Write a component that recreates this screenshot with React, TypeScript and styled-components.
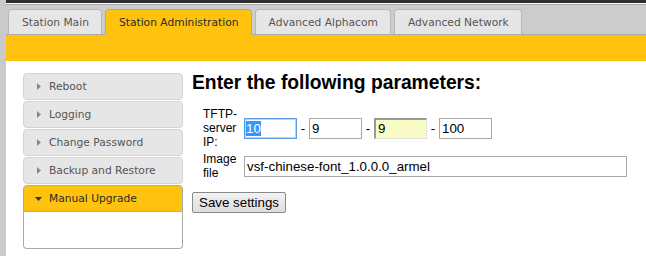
import React from "react";
import styled, { createGlobalStyle } from "styled-components";

const tabs = ["Station Main", "Station Administration", "Advanced Alphacom", "Advanced Network"];
const menu = ["Reboot", "Logging", "Change Password", "Backup and Restore"];

export default function App() {
  return (
    <>
      <GlobalStyle />
      <Page>
        <TabBar>
          {tabs.map((t, i) => (
            <Tab key={t} $active={i === 1}>
              {t}
            </Tab>
          ))}
        </TabBar>
        <YellowBar />
        <Content>
          <Sidebar>
            {menu.map((m) => (
              <MenuItem key={m}>
                <Arrow width="4" height="7" viewBox="0 0 4 7">
                  <path d="M0 0 L4 3.5 L0 7 Z" fill="#888" />
                </Arrow>
                {m}
              </MenuItem>
            ))}
            <ActiveItem>
              <Arrow width="7" height="4" viewBox="0 0 7 4">
                <path d="M0 0 L7 0 L3.5 4 Z" fill="#333" />
              </Arrow>
              Manual Upgrade
            </ActiveItem>
            <Panel />
          </Sidebar>
          <Main>
            <Heading>Enter the following parameters:</Heading>
            <Form>
              <Label>TFTP-server IP:</Label>
              <IpRow>
                <FocusedField>
                  <Selected>10</Selected>
                </FocusedField>
                <Dash>-</Dash>
                <Field $width={53} defaultValue="9" />
                <Dash>-</Dash>
                <Field $width={53} $filled defaultValue="9" />
                <Dash>-</Dash>
                <Field $width={53} defaultValue="100" />
              </IpRow>
              <Label>Image file</Label>
              <Field $width={383} defaultValue="vsf-chinese-font_1.0.0.0_armel" />
            </Form>
            <SaveButton>Save settings</SaveButton>
          </Main>
        </Content>
      </Page>
    </>
  );
}

const GlobalStyle = createGlobalStyle`
  html, body {
    margin: 0;
    padding: 0;
    background: #fff;
  }
  body {
    width: 646px;
    height: 256px;
    overflow: hidden;
    font-family: "Liberation Sans", Arial, sans-serif;
  }
`;

const Page = styled.div`
  box-sizing: border-box;
  min-height: 256px;
  border-left: 6px solid #cacaca;
`;

const TabBar = styled.div`
  display: flex;
  align-items: flex-end;
  gap: 3px;
  height: 35px;
  box-sizing: border-box;
  padding: 0 0 0 2px;
  background: #cccccc;
  border-top: 3px solid #2f2f2f;
  border-bottom: 1px solid #aaa;
  box-shadow: inset 0 1px 0 #fff, inset 0 2px 0 #aaa;
`;

const Tab = styled.div<{ $active?: boolean }>`
  height: 26px;
  box-sizing: border-box;
  display: flex;
  align-items: center;
  padding: 0 12px 0 13px;
  margin-bottom: -1px;
  font-family: "DejaVu Sans", Verdana, sans-serif;
  font-size: 10.7px;
  color: ${(p) => (p.$active ? "#2a2a2a" : "#555")};
  background: ${(p) => (p.$active ? "#ffc20e" : "#e6e6e6")};
  border: 1px solid ${(p) => (p.$active ? "#aaa" : "#b8b8b8")};
  border-bottom-color: ${(p) => (p.$active ? "#ffc20e" : "#aaa")};
  border-radius: 4px 4px 0 0;
`;

const YellowBar = styled.div`
  height: 26px;
  background: #ffc20e;
`;

const Content = styled.div`
  display: flex;
  gap: 9px;
  padding: 12px 0 0 17px;
`;

const Sidebar = styled.div`
  width: 160px;
  display: flex;
  flex-direction: column;
  gap: 1px;
  font-family: "DejaVu Sans", Verdana, sans-serif;
  font-size: 10.7px;
`;

const MenuItem = styled.div`
  height: 27px;
  box-sizing: border-box;
  display: flex;
  align-items: center;
  gap: 8px;
  padding-left: 13px;
  color: #555;
  background: #e6e6e6;
  border: 1px solid #d3d3d3;
  border-radius: 4px;
`;

const ActiveItem = styled(MenuItem)`
  gap: 7px;
  padding-left: 11px;
  color: #2a2a2a;
  background: #ffc20e;
  border-color: #aaa;
  border-radius: 4px 4px 0 0;
`;

const Panel = styled.div`
  height: 37px;
  margin-top: -1px;
  box-sizing: border-box;
  border: 1px solid #aaa;
  border-top: 0;
  border-radius: 0 0 4px 4px;
  background: #fff;
`;

const Arrow = styled.svg`
  flex: none;
  display: block;
`;

const Main = styled.div`
  display: flex;
  flex-direction: column;
  align-items: flex-start;
`;

const Heading = styled.h3`
  margin: -1px 0 0 0;
  font-size: 19.3px;
  font-weight: bold;
  color: #000;
`;

const Form = styled.div`
  display: grid;
  grid-template-columns: 38px auto;
  column-gap: 3px;
  row-gap: 3px;
  align-items: center;
  margin: 13px 0 0 11px;
`;

const Label = styled.div`
  font-size: 12px;
  line-height: 14px;
  color: #000;
`;

const IpRow = styled.div`
  display: flex;
  align-items: center;
`;

const Dash = styled.span`
  width: 12px;
  text-align: center;
  font-size: 13.33px;
`;

const Field = styled.input<{ $width: number; $filled?: boolean }>`
  width: ${(p) => p.$width}px;
  height: 21px;
  box-sizing: border-box;
  padding: 1px 2px;
  margin: 0;
  font-family: "Liberation Sans", Arial, sans-serif;
  font-size: 13.33px;
  color: #000;
  outline: none;
  background: ${(p) => (p.$filled ? "#fafcc6" : "#fff")};
  border: 1px solid #a9a9a9;
  ${(p) =>
    p.$filled &&
    `border-top: 2px solid #9a9a9a; border-left: 2px solid #9a9a9a; border-right-color: #e2e2e2; border-bottom-color: #e2e2e2;`}
`;

const FocusedField = styled.div`
  width: 53px;
  height: 21px;
  box-sizing: border-box;
  display: flex;
  align-items: center;
  padding: 0 1px;
  font-size: 13.33px;
  background: #fff;
  border: 1px solid #5a9de6;
  box-shadow: inset 0 0 0 1px #b9d4f4;
`;

const Selected = styled.span`
  background: #3399ff;
  color: #fff;
  line-height: 15px;
`;

const SaveButton = styled.button`
  margin-top: 12px;
  height: 21px;
  padding: 0 6px;
  font-family: "Liberation Sans", Arial, sans-serif;
  font-size: 13.33px;
  color: #000;
  background: linear-gradient(#f3f3f3, #dddddd);
  border: 1px solid #8a8a8a;
  border-radius: 2px;
`;
